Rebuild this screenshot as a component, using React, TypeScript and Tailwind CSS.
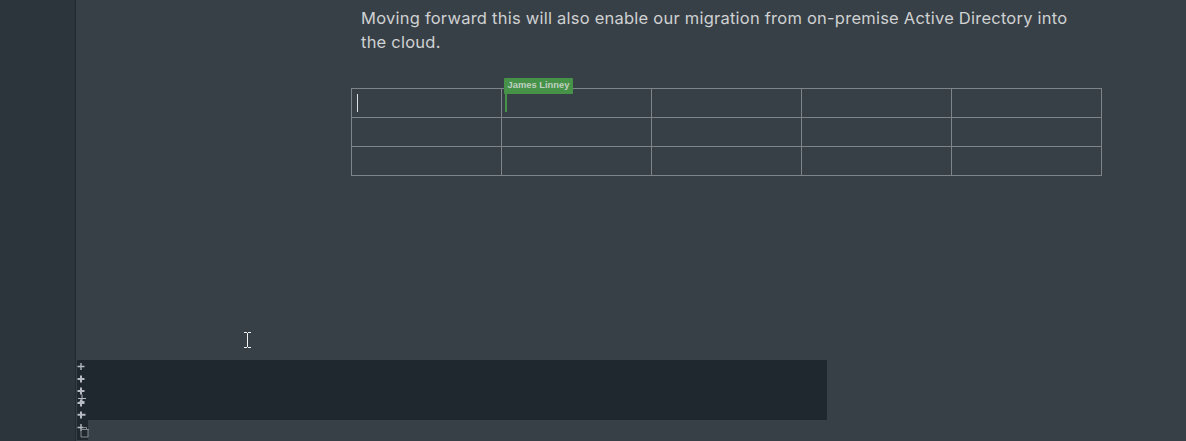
const ROWS = [0, 1, 2];
const COLUMNS = [0, 1, 2, 3, 4];

function RemoteCaret({ name }: { name: string }) {
  return (
    <div className="absolute -top-[11px] left-[2px] z-10">
      <div className="flex h-4 w-[69px] items-center justify-center whitespace-nowrap rounded-[1px] bg-[#479249] pb-[2px] text-[9.4px] font-bold leading-none text-[#bfd0c1]">
        {name}
      </div>
      <div className="ml-px h-[18px] w-[2px] bg-[#479249]" />
    </div>
  );
}

function TableGrid() {
  return (
    <table className="ml-[275px] mt-[34px] w-[751px] table-fixed border-collapse">
      <tbody>
        {ROWS.map((row) => (
          <tr key={row} className="h-[29px]">
            {COLUMNS.map((column) => (
              <td key={column} className="relative border border-[#7e8488] p-0">
                {row === 0 && column === 0 && <div className="ml-[5px] h-[18px] w-px bg-[#dfe2e4]" />}
                {row === 0 && column === 1 && <RemoteCaret name="James Linney" />}
              </td>
            ))}
          </tr>
        ))}
      </tbody>
    </table>
  );
}

function TextCursor() {
  return (
    <svg width="7" height="16" viewBox="0 0 7 16" shapeRendering="crispEdges" fill="#f1f3f4" className="ml-[168px]">
      <path d="M0 0h3v1H0zM4 0h3v1H4zM3 1h1v14H3zM0 15h3v1H0zM4 15h3v1H4z" />
    </svg>
  );
}

function Handles() {
  return (
    <svg width="12" height="80" viewBox="0 0 12 80" fill="none" className="relative -mr-px shrink-0">
      <path d="M0 0h11v80H0z" fill="#20282f" />
      <g stroke="#b6bbc4">
        <path d="M.5 6.5h7M4 3v7" strokeWidth="1.3" />
        <path d="M.5 19h7M4 15.5v7" strokeWidth="2" />
        <path d="M.5 31h7M4 27.5v7" strokeWidth="2" />
        <path d="M1 38.5h8M5 34.5v8M2.5 41.5h5" strokeWidth="1" />
        <path d="M.5 43h7M4 39.5v7" strokeWidth="2" />
        <path d="M.5 54.8h8M4 51.5v7" strokeWidth="2" />
        <path d="M.5 67.5h6M4 64v7" strokeWidth="1.4" />
      </g>
      <path d="M3 69.5h9M4 69.5v7.5h7v-7.5M5.5 67.5h4v2" stroke="#858a8e" />
    </svg>
  );
}

export default function App() {
  return (
    <div className="flex h-[441px] w-[1186px] overflow-hidden bg-[#384047] font-['Liberation_Sans',sans-serif]">
      <aside className="w-[76px] shrink-0 border-r border-[#22292f] bg-[#2c343c]" />
      <main className="flex min-w-0 grow flex-col">
        <p className="ml-[285px] mt-[6px] h-12 whitespace-nowrap font-['Inter',sans-serif] text-[16.5px] leading-[24px] tracking-[0.232px] text-[#cfd1d2]">
          Moving forward this will also enable our migration from on-premise Active Directory into
          <br />
          the cloud.
        </p>
        <TableGrid />
        <div className="mt-[156px] h-7">
          <TextCursor />
        </div>
        <div className="ml-px flex items-start">
          <Handles />
          <div className="h-[60px] w-[739px] bg-[#20282f]" />
        </div>
      </main>
    </div>
  );
}
